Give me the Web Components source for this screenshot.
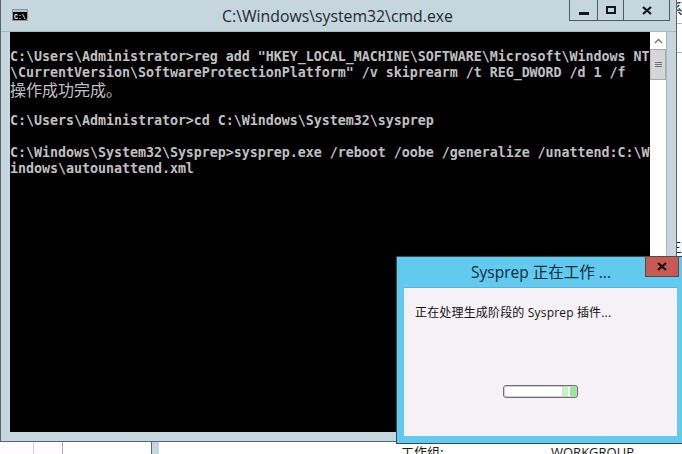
<!DOCTYPE html>
<html lang="zh">
<head>
<meta charset="utf-8">
<title>Sysprep</title>
<style>
  html, body { margin: 0; padding: 0; background: #fff; }
  body { width: 682px; height: 454px; overflow: hidden; font-family: "Open Sans", "Noto Sans CJK SC", sans-serif; }
</style>
</head>
<body>
<desk-top>
  <cmd-window title-text="C:\Windows\system32\cmd.exe">
    <span slot="line">&nbsp;</span>
    <span slot="line">C:\Users\Administrator&gt;reg add "HKEY_LOCAL_MACHINE\SOFTWARE\Microsoft\Windows NT</span>
    <span slot="line">\CurrentVersion\SoftwareProtectionPlatform" /v skiprearm /t REG_DWORD /d 1 /f</span>
    <span slot="line" class="cjk">操作成功完成。</span>
    <span slot="line">&nbsp;</span>
    <span slot="line">C:\Users\Administrator&gt;cd C:\Windows\System32\sysprep</span>
    <span slot="line">&nbsp;</span>
    <span slot="line">C:\Windows\System32\Sysprep&gt;sysprep.exe /reboot /oobe /generalize /unattend:C:\W</span>
    <span slot="line">indows\autounattend.xml</span>
  </cmd-window>
  <sysprep-dialog title-text="Sysprep 正在工作 ..." message="正在处理生成阶段的 Sysprep 插件..."></sysprep-dialog>
</desk-top>

<script>
const deskTemplate = document.createElement('template');
deskTemplate.innerHTML = `
  <style>
    :host { display: block; position: relative; width: 682px; height: 454px; overflow: hidden; background: #fff; color: #1a1a1a; }
    .top { display: flex; height: 442px; }
    .side { flex: 1; overflow: hidden; }
    .side__glyph { height: 24px; font: 14px/17px "Noto Sans CJK SC", sans-serif; margin-left: -8px; border-bottom: 1px solid #b9b9b9; box-sizing: border-box; }
    .side__row { height: 29px; border-bottom: 1px solid #b9b9b9; box-sizing: border-box; }
    .side__text { margin-top: 186px; font: 14px/14px "Noto Sans CJK SC", sans-serif; margin-left: -9px; }
    .bottom { display: flex; height: 12px; }
    .bottom__a { width: 33px; background: #fdfbfd; border-right: 1px solid #d4d2d6; }
    .bottom__b { width: 28px; background: #fdfbfd; border-right: 1px solid #a9a9a9; }
    .bottom__c { width: 88px; border-right: 1px solid #5f6b72; }
    .bottom__d { width: 7px; background: #c5d6de; }
    .bottom__e { margin-left: 242px; width: 150px; font: 13px/16px "Noto Sans CJK SC", sans-serif; padding-top: 2px; white-space: nowrap; }
    .bottom__f { font: 13px/16px "Open Sans", sans-serif; padding-top: 2px; white-space: nowrap; }
  </style>
  <div class="top">
    <slot></slot>
    <div class="side">
      <div class="side__glyph">系</div>
      <div class="side__row"></div>
      <div class="side__text">三</div>
    </div>
  </div>
  <div class="bottom">
    <div class="bottom__a"></div>
    <div class="bottom__b"></div>
    <div class="bottom__c"></div>
    <div class="bottom__d"></div>
    <div class="bottom__e">工作组:</div>
    <div class="bottom__f">WORKGROUP</div>
  </div>
`;

class DeskTop extends HTMLElement {
  constructor() {
    super();
    this.attachShadow({mode: 'open'});
    this.shadowRoot.appendChild(deskTemplate.content.cloneNode(true));
  }
}

const cmdTemplate = document.createElement('template');
cmdTemplate.innerHTML = `
  <style>
    :host { display: block; box-sizing: border-box; width: 677px; height: 442px; background: #c5d6de; border-left: 1px solid #59656c; border-right: 1px solid #59656c; border-bottom: 1px solid #59656c; }
    .bar { position: relative; display: flex; justify-content: center; height: 32px; box-sizing: border-box; border-bottom: 1px solid #aab8bf; }
    .bar__icon { position: absolute; left: 11px; top: 9px; }
    .bar__title { margin-right: 2px; font: 15.8px/32px "Open Sans", sans-serif; color: #1c2a33; white-space: nowrap; }
    .buttons { position: absolute; right: 6px; top: 0; display: flex; height: 21px; box-sizing: border-box; border: 1px solid #4f5c64; border-top: 0; }
    .btn { display: flex; align-items: center; justify-content: center; box-sizing: border-box; width: 26px; height: 20px; border-right: 1px solid #4f5c64; }
    .btn:first-child { width: 28px; }
    .btn:last-child { width: 45px; border-right: 0; }
    .body { display: flex; height: 400px; margin: 0 9px; }
    .console { width: 640px; background: #000; color: #c0c0c0; font: bold 13.33px/16px "DejaVu Sans Mono", "Noto Sans CJK SC", monospace; letter-spacing: -0.03px; padding-top: 1px; box-sizing: border-box; overflow: hidden; }
    ::slotted(span) { display: block; height: 16px; white-space: pre; }
    ::slotted(.cjk) { font: 16px/16px "Noto Sans CJK SC", sans-serif; letter-spacing: 0; }
  </style>
  <div class="bar">
    <svg class="bar__icon" width="16" height="12" viewBox="0 0 16 12">
      <rect width="16" height="12" fill="#8a969c"/>
      <rect x="1" y="1" width="14" height="2" fill="#b7c2c8"/>
      <rect x="1" y="3" width="14" height="8" fill="#000"/>
      <text x="2" y="9.5" font-family="Liberation Mono" font-size="6.5" font-weight="bold" fill="#fff">C:\\_</text>
    </svg>
    <div class="bar__title"></div>
    <div class="buttons">
      <div class="btn"><svg width="10" height="4" style="margin-top:7px"><rect width="10" height="3" y="0" fill="#10181d"/></svg></div>
      <div class="btn"><svg width="10" height="8"><rect x="1" y="1" width="8" height="6" fill="none" stroke="#10181d" stroke-width="2"/></svg></div>
      <div class="btn"><svg width="10" height="9" viewBox="0 0 10 9"><path d="M1 1l8 7M9 1L1 8" stroke="#10181d" stroke-width="2.2" fill="none"/></svg></div>
    </div>
  </div>
  <div class="body">
    <div class="console"><slot name="line"></slot></div>
    <cmd-scrollbar></cmd-scrollbar>
  </div>
`;

class CmdWindow extends HTMLElement {
  constructor() {
    super();
    this.attachShadow({mode: 'open'});
    this.shadowRoot.appendChild(cmdTemplate.content.cloneNode(true));
    this.shadowRoot.querySelector('.bar__title').textContent = this.getAttribute('title-text');
  }
}

const scrollTemplate = document.createElement('template');
scrollTemplate.innerHTML = `
  <style>
    :host { display: block; width: 17px; background: #fff; border-right: 1px solid #aab8bf; box-sizing: border-box; }
    .arrow { display: flex; align-items: center; justify-content: center; height: 17px; }
    .thumb { display: flex; flex-direction: column; align-items: center; justify-content: center; gap: 1px; height: 31px; box-sizing: border-box; background: #d3d5d6; border-top: 1px solid #a6a8a9; border-bottom: 1px solid #a6a8a9; border-left: 1px solid #c0c2c3; border-right: 1px solid #a6a8a9; }
    .thumb i { display: block; width: 7px; height: 1px; background: #6d7174; }
  </style>
  <div class="arrow"><svg width="9" height="6" viewBox="0 0 9 6"><path d="M1 5l3.5-3.5L8 5" stroke="#6d7174" stroke-width="1.4" fill="none"/></svg></div>
  <div class="thumb"><i></i><i></i><i></i></div>
`;

class CmdScrollbar extends HTMLElement {
  constructor() {
    super();
    this.attachShadow({mode: 'open'});
    this.shadowRoot.appendChild(scrollTemplate.content.cloneNode(true));
  }
}

const dialogTemplate = document.createElement('template');
dialogTemplate.innerHTML = `
  <style>
    :host { display: block; position: absolute; left: 396px; top: 256px; width: 290px; height: 188px; box-sizing: border-box; background: #62c9ef; border: 1px solid #3a4a55; }
    .bar { position: relative; display: flex; justify-content: center; height: 30px; }
    .bar__title { font: 15.5px/30px "Open Sans", "Noto Sans CJK SC", sans-serif; color: #0f2c3e; white-space: nowrap; }
    .close { position: absolute; left: 248px; top: -1px; display: flex; align-items: center; justify-content: center; width: 34px; height: 21px; box-sizing: border-box; background: #c75b53; border: 1px solid #4d4a4c; }
    .content { box-sizing: border-box; margin: 0 8px 0 7px; height: 149px; background: #f5f1f6; border-top: 1px solid #5fb2d6; padding: 17px 11px 0; }
    .content p { margin: 0; font: 12px/16px "Open Sans", "Noto Sans CJK SC", sans-serif; letter-spacing: 0.17px; color: #111; white-space: nowrap; }
    .content__bar { display: flex; justify-content: center; margin-top: 64px; }
  </style>
  <div class="bar">
    <div class="bar__title"></div>
    <div class="close"><svg width="10" height="9" viewBox="0 0 10 9"><path d="M1 1l8 7M9 1L1 8" stroke="#14100f" stroke-width="2.2" fill="none"/></svg></div>
  </div>
  <div class="content">
    <p></p>
    <div class="content__bar"><busy-bar></busy-bar></div>
  </div>
`;

class SysprepDialog extends HTMLElement {
  constructor() {
    super();
    this.attachShadow({mode: 'open'});
    this.shadowRoot.appendChild(dialogTemplate.content.cloneNode(true));
    this.shadowRoot.querySelector('.bar__title').textContent = this.getAttribute('title-text');
    this.shadowRoot.querySelector('p').textContent = this.getAttribute('message');
  }
}

const busyTemplate = document.createElement('template');
busyTemplate.innerHTML = `
  <style>
    :host { display: flex; justify-content: flex-end; gap: 2px; width: 75px; height: 13px; box-sizing: border-box; padding: 1px; background: #fff; border: 1px solid #6e6e6e; border-radius: 3px; box-shadow: inset 0 0 0 1px #cfcfcf; }
    i { display: block; width: 6px; background: #c6f3c6; }
    i:last-child { background: #98e698; }
  </style>
  <i></i><i></i>
`;

class BusyBar extends HTMLElement {
  constructor() {
    super();
    this.attachShadow({mode: 'open'});
    this.shadowRoot.appendChild(busyTemplate.content.cloneNode(true));
  }
}

customElements.define('desk-top', DeskTop);
customElements.define('cmd-window', CmdWindow);
customElements.define('cmd-scrollbar', CmdScrollbar);
customElements.define('sysprep-dialog', SysprepDialog);
customElements.define('busy-bar', BusyBar);
</script>
</body>
</html>
